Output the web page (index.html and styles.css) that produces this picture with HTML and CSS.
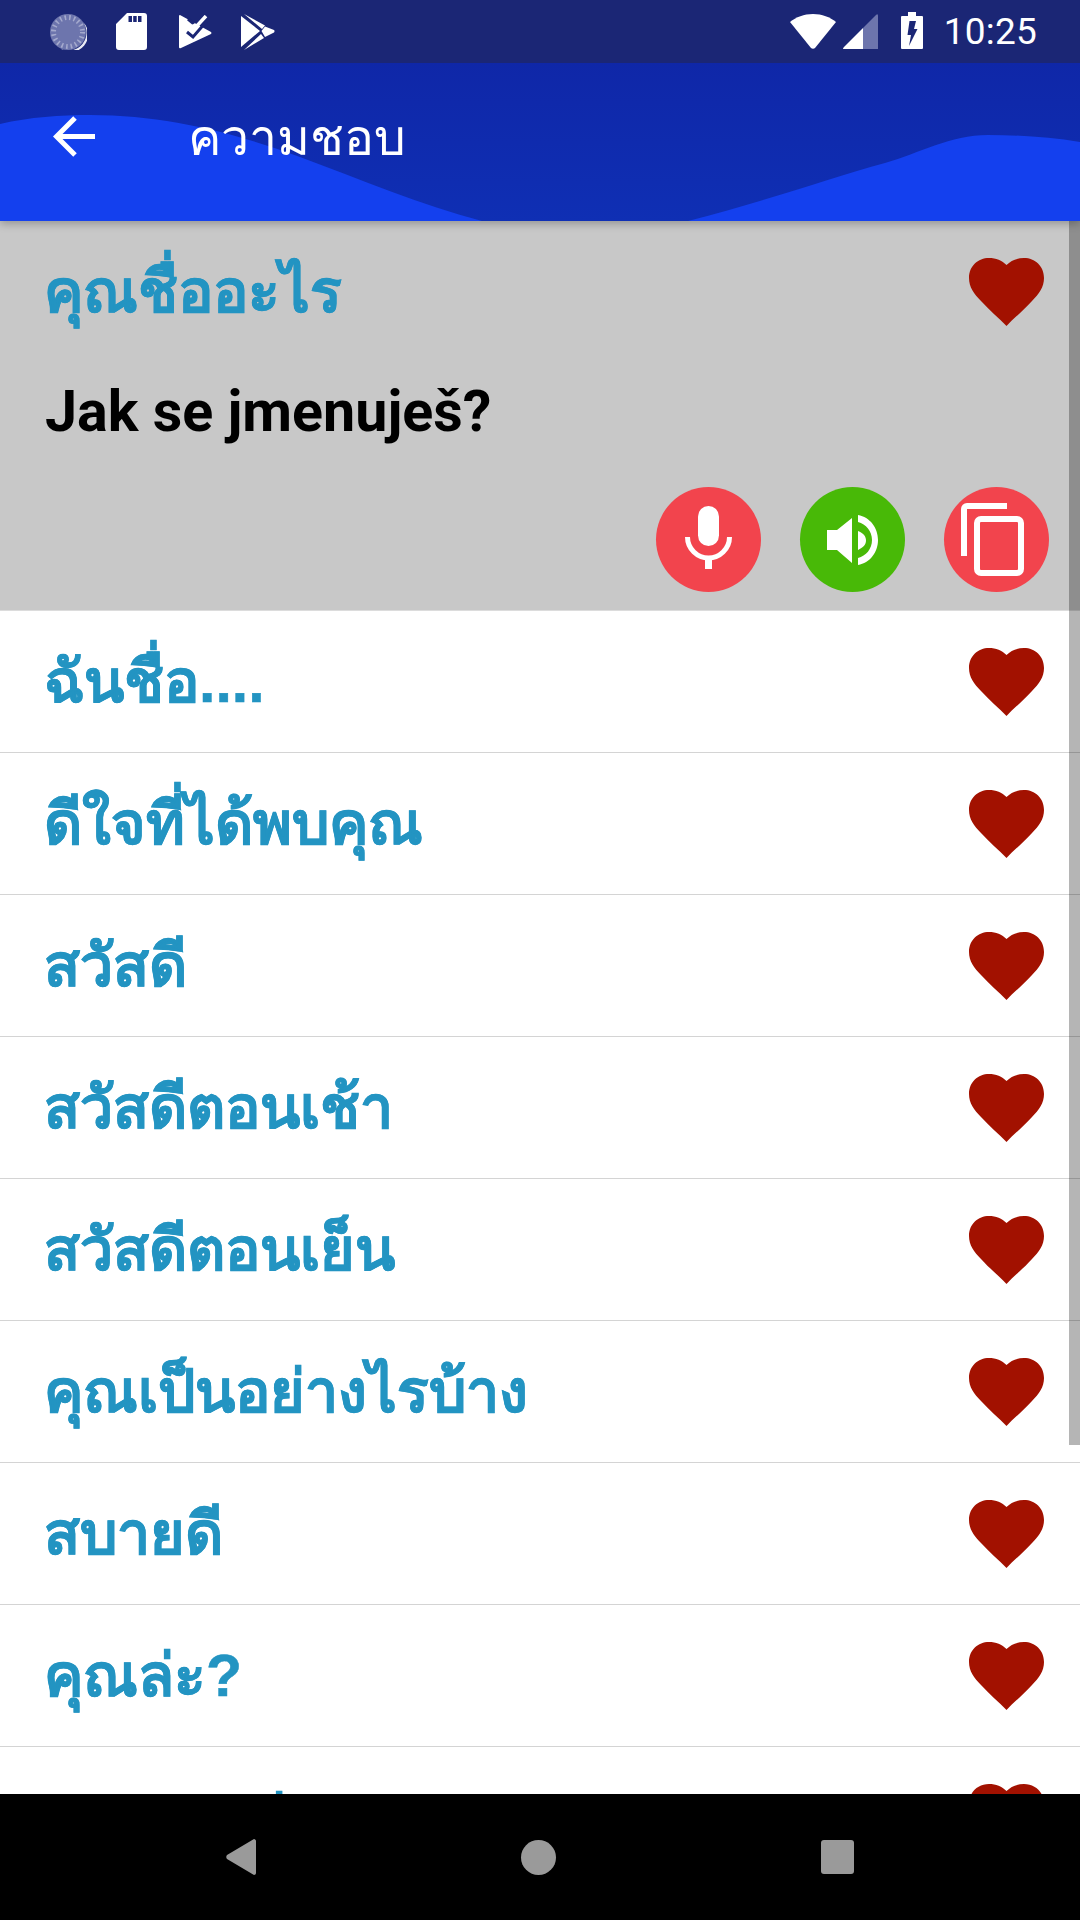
FILE: index.html
```html
<!DOCTYPE html>
<html lang="th">
<head>
<meta charset="utf-8">
<title>ความชอบ</title>
<link rel="stylesheet" href="styles.css">
</head>
<body>
<svg class="defs" width="0" height="0" aria-hidden="true">
  <symbol id="heart" viewBox="0 0 75 68"><path d="M37.500 68C30 60 20 52 12 43 5 36 0 29 0 20 0 8 9 0 20 0c7 0 13 2.500 17.500 7C42 2.500 48 0 55 0c11 0 20 8 20 20 0 9-5 16-12 23-8 9-18 17-25.500 25z"/></symbol>
</svg>
<div class="phone">
  <header class="status">
    <div class="status-group left">
      <svg class="ic" width="38" height="36" viewBox="0 0 38 36"><circle cx="19" cy="18" r="18" fill="#6d75ad"/><circle cx="19" cy="18" r="14.500" fill="none" stroke="#a4a9cd" stroke-width="5" stroke-dasharray="1.600 3"/><path d="M34 8A18 18 0 0 1 12 35 17.500 17.500 0 0 0 34 8z" fill="#e8e9f3"/></svg>
      <svg class="ic" width="31" height="37" viewBox="0 0 31 37"><path fill-rule="evenodd" fill="#fff" d="M11 0h17a3 3 0 0 1 3 3v31a3 3 0 0 1-3 3H3a3 3 0 0 1-3-3V11zM12.500 3v6H16V3zM17.200 3v6h3.500V3zM22 3v6h3.500V3z"/></svg>
      <svg class="ic flag" width="33" height="34" viewBox="0 0 33 34"><path fill="#fff" d="M1 0l31 17q1 1 0 2L2 33q-2 1-2-1V1q0-1 1-1z"/><path fill="none" stroke="#1b2675" stroke-width="3" d="M8 17l6 5L27 7"/><path fill="none" stroke="#1b2675" stroke-width="3" d="M9 4l6 5"/><path fill="none" stroke="#fff" stroke-width="3.500" d="M13 10l3 3L27 1"/></svg>
      <svg class="ic" width="34" height="36" viewBox="0 0 34 36"><path fill="#fff" d="M0 2l19 15L0 33zM3 0l21 11.500-3 3.500zM24 12.500l9 3.500q1 1 0 2.500L24 23l-3.500-6zM3 36l20-12-3-4z"/></svg>
    </div>
    <div class="status-group right">
      <svg class="ic" width="46" height="35" viewBox="0 0 46 35"><path fill="#fff" d="M0 8C6 3 14 0 23 0s17 3 23 8L25 34c-1 1-3 1-4 0z"/></svg>
      <svg class="ic" width="35" height="35" viewBox="0 0 35 35"><path fill="#fff" d="M1 33l19-19v21H1q-2 0 0-2z"/><path fill="#6d75ad" d="M20 14L33 1q2-2 2 1v33H20z"/></svg>
      <svg class="ic battery" width="22" height="37" viewBox="0 0 22 37"><path fill-rule="evenodd" fill="#fff" d="M7 0h8v4h6a1 1 0 0 1 1 1v31a1 1 0 0 1-1 1H1a1 1 0 0 1-1-1V5a1 1 0 0 1 1-1h6zM8.500 9L6.500 23H10l-2 11 8.500-17H13l2-8z"/></svg>
      <span class="clock">10:25</span>
    </div>
  </header>

  <div class="toolbar">
    <svg class="wave" viewBox="0 0 1080 158" preserveAspectRatio="none" aria-hidden="true">
      <path fill="#1440ee" d="M0 61C30 54 60 52 90 52c80 0 150 20 210 42 60 22 120 48 182 64h206c72-18 142-43 197-58 35-10 65-28 103-28 32 0 62 2 92 7v79H0z"/>
    </svg>
    <svg class="back" width="42" height="41" viewBox="0 0 42 41"><path fill="none" stroke="#fff" stroke-width="5" d="M42 20.500H5M22 2L3.500 20.500 22 39"/></svg>
    <h1 class="title">ความชอบ</h1>
  </div>

  <main class="list">
    <section class="selected">
      <div class="sel-head">
        <span class="thai">คุณชื่ออะไร</span>
        <svg class="heart"><use href="#heart"/></svg>
      </div>
      <p class="czech">Jak se jmenuješ?</p>
      <div class="actions">
        <button class="fab red"><svg class="mic" width="47" height="63" viewBox="0 0 47 63"><rect x="13" y="0" width="21" height="40" rx="10.500" fill="#fff"/><path d="M2.500 31c0 12 10 21 21 21s21-9 21-21" fill="none" stroke="#fff" stroke-width="5"/><path d="M23.500 50v13" stroke="#fff" stroke-width="7"/></svg></button>
        <button class="fab green"><svg width="51" height="50" viewBox="0 0 51 50"><path fill="#fff" d="M0 15h10L25 3v45L10 35H0z"/><path fill="#fff" d="M31 16c5 2 8 5 8 9.500s-3 7-8 9.500z"/><path fill="#fff" d="M31 0c12 2 20 13 20 25s-8 23-20 25v-7c8-2 14-9 14-18S39 9 31 7z"/></svg></button>
        <button class="fab red"><svg class="copy" width="63" height="73" viewBox="0 0 63 73"><path fill="none" stroke="#fff" stroke-width="6" d="M46 3H6a3 3 0 0 0-3 3v47"/><rect x="16" y="16" width="44" height="54" rx="4" fill="none" stroke="#fff" stroke-width="6"/></svg></button>
      </div>
    </section>
    <div class="row"><span class="thai">ฉันชื่อ....</span><svg class="heart"><use href="#heart"/></svg></div>
    <div class="row"><span class="thai">ดีใจที่ได้พบคุณ</span><svg class="heart"><use href="#heart"/></svg></div>
    <div class="row"><span class="thai">สวัสดี</span><svg class="heart"><use href="#heart"/></svg></div>
    <div class="row"><span class="thai">สวัสดีตอนเช้า</span><svg class="heart"><use href="#heart"/></svg></div>
    <div class="row"><span class="thai">สวัสดีตอนเย็น</span><svg class="heart"><use href="#heart"/></svg></div>
    <div class="row"><span class="thai">คุณเป็นอย่างไรบ้าง</span><svg class="heart"><use href="#heart"/></svg></div>
    <div class="row"><span class="thai">สบายดี</span><svg class="heart"><use href="#heart"/></svg></div>
    <div class="row"><span class="thai">คุณล่ะ?</span><svg class="heart"><use href="#heart"/></svg></div>
    <div class="row"><span class="thai">ขอบคุณก่อน</span><svg class="heart"><use href="#heart"/></svg></div>
    <div class="scrollbar"></div>
  </main>

  <nav class="navbar">
    <svg width="30" height="36" viewBox="0 0 30 36"><path fill="#9a9a9a" d="M28 0c1 0 2 1 2 2v32c0 1-1 2-2 2L1 20c-1-1-1-3 0-4z"/></svg>
    <span class="nav-dot"></span>
    <span class="nav-square"></span>
  </nav>
</div>
</body>
</html>
```
FILE: styles.css
```css
* { box-sizing: border-box; }
html, body { margin: 0; padding: 0; }
body { width: 1080px; height: 1920px; overflow: hidden; background: #fff; font-family: "Liberation Sans", sans-serif; }
.defs { position: absolute; }
.phone { width: 1080px; height: 1920px; display: flex; flex-direction: column; }

.status { height: 63px; flex: none; background: #1b2675; display: flex; justify-content: space-between; align-items: center; padding: 0 43px 0 49px; position: relative; z-index: 3; }
.status-group { display: flex; align-items: center; }
.status-group.left { gap: 29px; }
.status-group.right { gap: 7px; }
.ic { display: block; flex: none; }
.flag { margin-left: 3px; }
.battery { margin-left: 16px; margin-top: -2px; }
.clock { font-family: Roboto, sans-serif; font-size: 37px; line-height: 38px; color: #fff; margin-left: 14px; letter-spacing: .2px; }

.toolbar { height: 158px; flex: none; background: linear-gradient(#0f27a8, #0f2fb4); position: relative; display: flex; align-items: center; z-index: 2; box-shadow: 0 3px 8px rgba(0, 0, 0, .25); }
.wave { position: absolute; left: 0; top: 0; width: 1080px; height: 158px; }
.back { position: relative; margin: -11px 0 0 53px; }
.title { position: relative; margin: -8px 0 0 93px; font-size: 50px; font-weight: 400; color: #fff; line-height: 60px; }

.list { flex: 1; min-height: 0; position: relative; overflow: hidden; }
.thai { font-size: 59px; font-weight: 700; color: #2394c2; line-height: 70px; margin-left: -1px; -webkit-text-stroke: .5px #2394c2; }
.heart { width: 75px; height: 68px; fill: #a21100; flex: none; }

.selected { height: 390px; background: #c8c8c8; padding: 0 31px 18px 45px; display: flex; flex-direction: column; border-bottom: 1px solid #dcdcdc; }
.sel-head { display: flex; justify-content: space-between; align-items: center; height: 142px; padding-right: 5px; }
.czech { margin: 14px 0 0; font-family: Roboto, sans-serif; font-weight: 700; font-size: 57.400px; line-height: 70px; color: #000; }
.actions { margin-top: auto; display: flex; justify-content: flex-end; gap: 39px; }
.fab { width: 105px; height: 105px; border: 0; padding: 0; border-radius: 50%; display: flex; align-items: center; justify-content: center; }
.fab.red { background: #f2444d; }
.fab.green { background: #48b907; }
.mic { margin-top: -4px; }
.copy { margin-right: 8px; }

.row { height: 142px; display: flex; justify-content: space-between; align-items: center; padding: 0 36px 0 45px; border-bottom: 1px solid #d4d4d4; }

.scrollbar { position: absolute; right: 0; top: 0; width: 11px; height: 1224px; background: rgba(0, 0, 0, .29); }

.navbar { height: 126px; flex: none; background: #000; position: relative; z-index: 3; display: flex; align-items: center; justify-content: space-between; padding: 0 226px; }
.nav-dot { width: 35px; height: 35px; background: #9a9a9a; border-radius: 50%; }
.nav-square { width: 33px; height: 34px; background: #9a9a9a; border-radius: 3px; }
```
